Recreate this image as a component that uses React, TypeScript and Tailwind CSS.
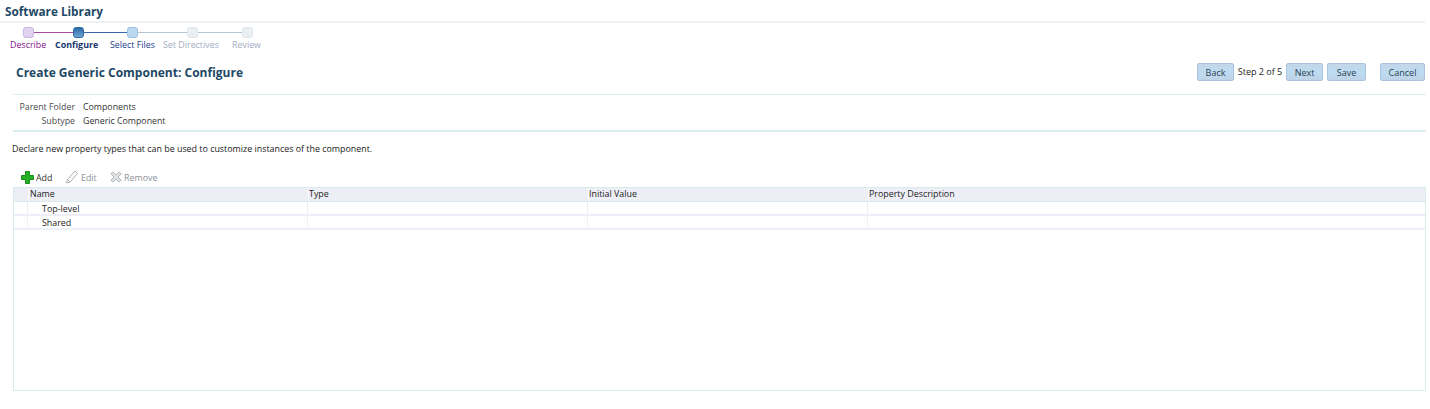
const font = "[font-family:'Open_Sans','Noto_Sans',sans-serif]";

function Knob({ c }: { c: string }) {
  return <div className={`w-[11px] h-[11px] rounded-[3px] border shrink-0 ${c}`} />;
}

function Btn({ children, w }: { children: string; w: string }) {
  return (
    <div className={`${w} h-[18px] flex items-center justify-center rounded-[2px] border border-[#a9c4dc] bg-gradient-to-b from-[#c3d6e8] via-[#bcdcf2] to-[#bfd3e7] text-[9px] leading-none text-[#2e3f4e]`}>
      {children}
    </div>
  );
}

function Row({ name }: { name: string }) {
  return (
    <div className="flex h-[14px] items-center bg-white border-b-2 border-[#eeeef8] text-[8.9px] leading-none text-[#222]">
      <div className="w-[14px] h-full border-r border-[#eef0f6] shrink-0" />
      <div className="w-[280px] h-full pl-[14px] pt-[2px] flex items-center border-r border-[#eef0f6] shrink-0">{name}</div>
      <div className="w-[280px] h-full border-r border-[#eef0f6] shrink-0" />
      <div className="w-[280px] h-full border-r border-[#eef0f6] shrink-0" />
      <div className="flex-1" />
    </div>
  );
}

export default function App() {
  return (
    <div className={`w-[1430px] h-[409px] bg-white overflow-hidden ${font}`}>
      <div className="h-[23px] pl-[5px] pt-[3px] mr-[5px] border-b-2 border-[#eef0f5]">
        <div className="text-[11.75px] leading-[16px] font-bold text-[#1d4866]">Software Library</div>
      </div>

      <div className="ml-[23px] mt-[3px] flex items-center h-[12px]">
        <Knob c="border-[#c9b4e0] bg-[#e3d3f2]" />
        <div className="w-[39px] h-px bg-[#a44aa8]" />
        <Knob c="border-[#2f6ba0] bg-gradient-to-b from-[#2a6ca6] to-[#6ea6d2]" />
        <div className="w-[43px] h-px bg-[#3c62a8]" />
        <Knob c="border-[#9cc2e2] bg-[#bcd8f0]" />
        <div className="w-[49px] h-px bg-[#b9c4d2]" />
        <Knob c="border-[#dfe6ea] bg-[#eaf0f2]" />
        <div className="w-[44px] h-px bg-[#b9c4d2]" />
        <Knob c="border-[#dfe6ea] bg-[#eaf0f2]" />
      </div>
      <div className="ml-[10px] flex items-center h-[14px] text-[8.9px] leading-none whitespace-nowrap">
        <span className="w-[45px] text-[#86108a]">Describe</span>
        <span className="w-[55px] font-bold text-[#17366f]">Configure</span>
        <span className="w-[53px] text-[#22408c]">Select Files</span>
        <span className="w-[69px] text-[#a3acc2]">Set Directives</span>
        <span className="text-[#a3acc2]">Review</span>
      </div>

      <div className="mt-[11px] ml-[16px] mr-[5px] flex items-center h-[20px]">
        <div className="text-[12px] font-bold text-[#1d4866]">Create Generic Component: Configure</div>
        <div className="ml-auto mb-[2px] flex items-center text-[9px] text-[#222] whitespace-nowrap">
          <Btn w="w-[37px]">Back</Btn>
          <span className="w-[52px] text-center">Step 2 of 5</span>
          <Btn w="w-[37px]">Next</Btn>
          <div className="w-[4px]" />
          <Btn w="w-[39px]">Save</Btn>
          <div className="w-[14px]" />
          <Btn w="w-[45px]">Cancel</Btn>
        </div>
      </div>

      <div className="mt-[11px] ml-[13px] mr-[4px] h-[30px] box-content border-t border-b-2 border-[#dcedef] pt-[5px] text-[8.8px] leading-[14px] text-[#333] whitespace-nowrap">
        <div className="flex"><span className="w-[62px] text-right text-[#4a4a4a]">Parent Folder</span><span className="ml-[8px]">Components</span></div>
        <div className="flex"><span className="w-[62px] text-right text-[#4a4a4a]">Subtype</span><span className="ml-[8px]">Generic Component</span></div>
      </div>

      <div className="mt-[10px] ml-[12px] text-[8.9px] leading-[14px] text-[#222]">
        Declare new property types that can be used to customize instances of the component.
      </div>

      <div className="mt-[13px] ml-[21px] flex items-center h-[16px] text-[8.9px] leading-none">
        <svg width="13" height="13" viewBox="0 0 13 13" className="mr-[2px]">
          <path d="M4.500 .5h4v4h4v4h-4v4h-4v-4h-4v-4h4z" fill="#22b322" stroke="#1c8a1c" />
        </svg>
        <span className="w-[30px] pt-[2px] text-[#333]">Add</span>
        <svg width="13" height="14" viewBox="0 0 13 14" className="mr-[2px]" fill="none" stroke="#aab0b4">
          <path d="M.5 13l1-3.500 7.500-8.500 2.500 2.500-7.500 8.500z" />
          <path d="M1.500 9.500l2.500 2.500" />
        </svg>
        <span className="w-[29px] pt-[2px] text-[#8c9298]">Edit</span>
        <svg width="12" height="12" viewBox="0 0 13 13" className="mr-[2px]">
          <path d="M1 3l2-2 3.500 3.500L10 1l2 2-3.500 3.500L12 10l-2 2-3.500-3.500L3 12l-2-2 3.500-3.500z" fill="#e4e6e8" stroke="#a4a8ac" />
        </svg>
        <span className="pt-[2px] text-[#8c9298]">Remove</span>
      </div>

      <div className="mt-[2px] ml-[13px] w-[1413px] h-[204px] border border-[#d8ecee]">
        <div className="flex h-[13px] items-center bg-[#edeef6] text-[8.9px] leading-none text-[#222] border-b border-[#dcebec] box-content">
          <div className="w-[14px] h-full shrink-0" />
          <div className="w-[280px] h-full flex items-center pl-[1px] border-l border-[#fafbfd] shrink-0">Name</div>
          <div className="w-[280px] h-full flex items-center border-l border-[#fafbfd] shrink-0">Type</div>
          <div className="w-[280px] h-full flex items-center border-l border-[#fafbfd] shrink-0">Initial Value</div>
          <div className="flex-1 h-full flex items-center border-l border-[#fafbfd]">Property Description</div>
        </div>
        <Row name="Top-level" />
        <Row name="Shared" />
      </div>
    </div>
  );
}
